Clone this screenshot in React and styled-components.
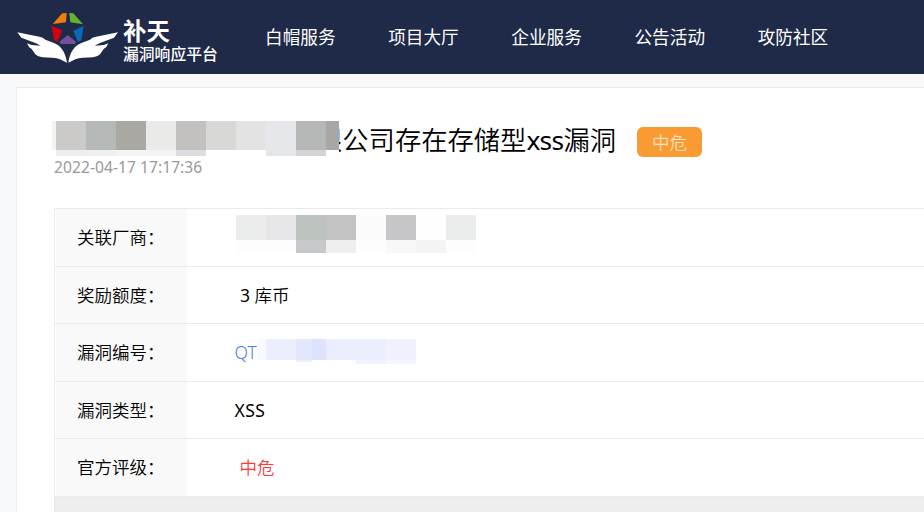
import React from "react";
import styled, { createGlobalStyle } from "styled-components";

const GlobalStyle = createGlobalStyle`
  * { box-sizing: border-box; }
  html, body { margin: 0; height: 100%; overflow: hidden; }
  body {
    background: #f7f9fb;
    color: #000;
    font-family: "Noto Sans", "Noto Sans CJK SC", sans-serif;
    font-weight: 350;
  }
`;

const Header = styled.header`
  display: flex;
  align-items: flex-start;
  height: 74px;
  background: #1f2a49;
  color: #fff;
  white-space: nowrap;
`;

const Brand = styled.div`
  display: flex;
  width: 265px;
  padding: 5px 0 0 10px;
`;

const Emblem = styled.svg`
  flex: none;
  width: 110px;
  height: 69px;
`;

const BrandText = styled.div`
  display: flex;
  flex-direction: column;
  padding: 14px 0 0 3px;
  font-family: "Noto Sans CJK SC", sans-serif;
`;

const BrandName = styled.span`
  font-size: 23.5px;
  font-weight: 700;
  line-height: 23px;
`;

const BrandTagline = styled.span`
  margin-top: 2px;
  font-size: 15.8px;
  font-weight: 500;
  line-height: 19px;
`;

const Nav = styled.nav`
  display: flex;
  gap: 52.6px;
  padding-top: 23px;
`;

const NavLink = styled.a`
  font-family: "Noto Sans CJK SC", sans-serif;
  font-size: 17.65px;
  font-weight: 400;
  line-height: 27px;
`;

const Card = styled.main`
  width: 908px;
  height: 425px;
  margin: 13px 0 0 16px;
  padding: 33px 0 0 37px;
  border: 1px solid #ebebeb;
  border-width: 1px 0 0 1px;
  background: #fff;
`;

const TitleRow = styled.div`
  position: relative;
  display: flex;
  height: 36px;
  padding-left: 262px;
`;

const Title = styled.h1`
  width: 321px;
  margin: 0;
  font-size: 26.3px;
  font-weight: 350;
  line-height: 38px;
  white-space: nowrap;
`;

const LatinText = styled.span`
  font-weight: 400;
  letter-spacing: ${(p) => p.$spacing || 0}px;
`;

const Badge = styled.span`
  height: 30px;
  width: 65px;
  margin-top: 6px;
  border-radius: 6px;
  background: #f99a32;
  color: #fde0bd;
  font-size: 17.5px;
  line-height: 30px;
  text-align: center;
`;

const Time = styled.time`
  display: block;
  height: 51px;
  font-size: 15.6px;
  font-weight: 400;
  letter-spacing: 0.05px;
  line-height: 21px;
  color: #999;
`;

const Table = styled.dl`
  margin: 0;
  height: 304px;
  border-left: 1px solid #ebebeb;
  border-top: 1px solid #ebebeb;
  background: #eee;
`;

const Row = styled.div`
  display: flex;
  height: ${(p) => p.$height}px;
  padding-left: 1px;
  border-bottom: 1px solid #ebebeb;
  background: #fff;
  font-size: 17.5px;
  line-height: 57px;
  white-space: nowrap;
`;

const Label = styled.dt`
  width: 131px;
  padding-left: 21px;
  background: #f9f9f9;
`;

const Value = styled.dd`
  position: relative;
  margin: 0;
  padding-left: ${(p) => p.$indent || 47.5}px;
  color: ${(p) => p.$color || "#000"};
`;

const Mosaic = styled.div`
  position: absolute;
  left: ${(p) => p.$left}px;
  top: ${(p) => p.$top}px;
`;

const Strip = styled.div`
  display: flex;
  height: ${(p) => p.$height}px;
`;

const Tile = styled.i`
  flex: none;
  width: ${(p) => p.$width}px;
  height: ${(p) => p.$height || "100%"};
  background: ${(p) => p.$color};
`;

const titleStrips = [
  [29, [[4, "#f3f3f1"], [30, "#cbcac8"], [30, "#b5b9b7"], [30, "#a9a8a3"], [30, "#eaeae8"], [30, "#c2c1bf"], [30, "#d8d8d6"], [30, "#e3e3e3"], [30, "#e5e7ea"], [30, "#b5b8b7"], [13, "#a8a7a3"]]],
  [6, [[4, "transparent"], [30, "#eeeeef"], [30, "#efefef"], [60, "#f4f4f4"], [30, "#dcdee1"], [60, "transparent"], [30, "#e4e6e9"], [30, "#d5d3d4"], [13, "#fff"]]],
];

const vendorStrips = [
  [25, [[30, "#ebeded"], [30, "#e7e7ea"], [30, "#bdc3be"], [30, "#c2c3c2"], [30, "#fbfbfb"], [30, "#c6c6c9"], [30, "#fefefe"], [30, "#ebedec"]]],
  [13, [[60, "#fdfdfd"], [30, "#c7c8cb"], [30, "#efefef"], [30, "#fdfdfd"], [30, "#f8f8f8"], [30, "#f4f4f4"], [30, "#fdfdfd"]]],
];

const numberStrips = [
  [21, [[9, "#f9faff"], [30, "#ebeefe"], [16, "#e2e7fd"], [14, "#dde3fe"], [60, "#ebeefe"], [30, "#eff1ff"]]],
  [4, [[39, "transparent"], [16, "#ebeefe", "2px"], [44, "transparent"], [30, "#eff2ff"], [30, "#f4f7ff"]]],
];

function Redaction({ left, top, strips }) {
  return (
    <Mosaic $left={left} $top={top} aria-hidden="true">
      {strips.map(([height, tiles], i) => (
        <Strip key={i} $height={height}>
          {tiles.map(([width, color, h], j) => (
            <Tile key={j} $width={width} $color={color} $height={h} />
          ))}
        </Strip>
      ))}
    </Mosaic>
  );
}

const links = ["白帽服务", "项目大厅", "企业服务", "公告活动", "攻防社区"];

export default function App() {
  return (
    <>
      <GlobalStyle />
      <Header>
        <Brand>
          <Emblem viewBox="0 0 330 207">
            <path fill="#ee7d0c" d="M157 25 L170 24 L168 52 L128 57Z" />
            <path fill="#63b32e" d="M178 24 L190 25 L219 58 L181 52Z" />
            <path fill="#d7000f" d="M124 62 L157 76 L142 111 L133 105Z" />
            <path fill="#0869b8" d="M221 62 L214 105 L204 111 L190 78Z" />
            <path fill="#76509d" d="M173 90 L199 111 L194 117 L153 117 L148 111Z" />
            <path fill="#fff" d="M22 82 L88 95 Q100 97 106 104 L130 113 C153 121 167 142 171 173 L150 163 Q141 158 127 158 L97 157 Q83 156 76 148 L65 132 L57 126 L51 115 L65 120 L92 122 L78 115 L34 98Z" />
            <path fill="#fff" d="M324 82 L258 95 Q246 97 240 104 L216 113 C193 121 179 142 175 173 L196 163 Q205 158 219 158 L249 157 Q263 156 270 148 L281 132 L289 126 L295 115 L281 120 L254 122 L268 115 L312 98Z" />
          </Emblem>
          <BrandText>
            <BrandName>补天</BrandName>
            <BrandTagline>漏洞响应平台</BrandTagline>
          </BrandText>
        </Brand>
        <Nav>
          {links.map((text) => (
            <NavLink key={text}>{text}</NavLink>
          ))}
        </Nav>
      </Header>
      <Card>
        <TitleRow>
          <Title>
            限公司存在存储型<LatinText $spacing={-0.7}>xss</LatinText>漏洞
          </Title>
          <Badge>中危</Badge>
          <Redaction left={-2} top={0} strips={titleStrips} />
        </TitleRow>
        <Time>2022-04-17 17:17:36</Time>
        <Table>
          <Row $height={58}>
            <Label>关联厂商：</Label>
            <Value>
              <Redaction left={49} top={6} strips={vendorStrips} />
            </Value>
          </Row>
          <Row $height={57}>
            <Label>奖励额度：</Label>
            <Value $indent={53}>
              <LatinText>3</LatinText> 库币
            </Value>
          </Row>
          <Row $height={58}>
            <Label>漏洞编号：</Label>
            <Value $color="#4e77ee">
              QT
              <Redaction left={70} top={15} strips={numberStrips} />
            </Value>
          </Row>
          <Row $height={57}>
            <Label>漏洞类型：</Label>
            <Value>
              <LatinText $spacing={0.4}>XSS</LatinText>
            </Value>
          </Row>
          <Row $height={58}>
            <Label>官方评级：</Label>
            <Value $indent={52.5} $color="#ff3b3b">中危</Value>
          </Row>
        </Table>
      </Card>
    </>
  );
}
